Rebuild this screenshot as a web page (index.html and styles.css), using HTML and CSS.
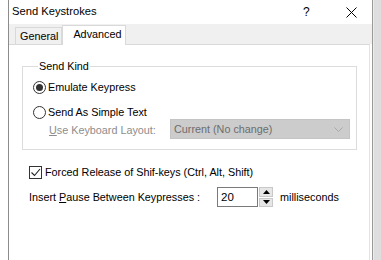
FILE: index.html
```html
<!DOCTYPE html>
<html lang="en">
<head>
	<meta charset="UTF-8">
	<title>Send Keystrokes</title>
	<link rel="stylesheet" href="styles.css">
</head>
<body>
	<div class="screen">
		<div class="window">
			<div class="titlebar">
				<span class="title">Send Keystrokes</span>
				<span class="help">?</span>
				<span class="close">
					<svg width="11" height="11" viewBox="0 0 11 11"><path d="M0.5 0.5 L10.5 10.5 M10.5 0.5 L0.5 10.5" stroke="#000" stroke-width="1" fill="none"/></svg>
				</span>
			</div>
			<div class="tabs">
				<div class="tab">General</div>
				<div class="tab active">Advanced</div>
			</div>
			<div class="page">
				<fieldset class="group">
					<legend>Send Kind</legend>
					<div class="radio"><span class="dot checked"></span>Emulate Keypress</div>
					<div class="radio second"><span class="dot"></span>Send As Simple Text</div>
					<div class="layout-row">
						<span class="muted"><u>U</u>se Keyboard Layout:</span>
						<div class="combo">
							<span>Current (No change)</span>
							<svg width="9" height="5" viewBox="0 0 9 5"><path d="M0.5 0.5 L4.5 4.5 L8.5 0.5" stroke="#a8a8a8" fill="none"/></svg>
						</div>
					</div>
				</fieldset>
				<div class="check">
					<span class="box">
						<svg width="11" height="11" viewBox="0 0 11 11"><path d="M1.5 5.5 L4.5 8.5 L10 2" stroke="#222" stroke-width="1.1" fill="none"/></svg>
					</span>Forced Release of Shif-keys (Ctrl, Alt, Shift)
				</div>
				<div class="pause-row">
					<span class="pause-label">Insert <u>P</u>ause Between Keypresses :</span>
					<div class="spin">
						<div class="num">20</div>
						<div class="arrows">
							<span class="arrow">
								<svg width="7" height="4" viewBox="0 0 7 4"><path d="M0 4 L3.5 0 L7 4 Z" fill="#000"/></svg>
							</span>
							<span class="arrow">
								<svg width="7" height="4" viewBox="0 0 7 4"><path d="M0 0 L3.5 4 L7 0 Z" fill="#000"/></svg>
							</span>
						</div>
					</div>
					<span class="unit">milliseconds</span>
				</div>
			</div>
		</div>
		<div class="desk"></div>
	</div>
</body>
</html>
```

FILE: styles.css
```css
*{
	margin: 0;
	padding: 0;
	box-sizing: border-box;
}
body{
	width: 381px;
	height: 260px;
	overflow: hidden;
	background-color: #fff;
	font-family: "Liberation Sans", Arial, sans-serif;
	font-size: 10.8px;
	color: #000;
}
.screen{
	display: flex;
	height: 260px;
	padding-left: 8px;
}
.window{
	width: 365px;
	height: 260px;
	border-left: 1px solid #8c8c8c;
	border-right: 1px solid #9a9a9a;
	display: flex;
	flex-direction: column;
	background-color: #fff;
}
.desk{
	flex: 1;
	background-color: #dedede;
	border-left: 1px solid #ececec;
}

/* title bar */
.titlebar{
	height: 24px;
	display: flex;
	align-items: center;
	padding-left: 3px;
	padding-bottom: 3px;
}
.title{
	font-size: 11.2px;
	flex: 1;
}
.help{
	font-size: 12px;
	width: 43px;
	margin-top: 2px;
}
.close{
	width: 24px;
	display: flex;
	margin-top: 3px;
	margin-right: 2px;
}

/* tabs */
.tabs{
	height: 20px;
	background-color: #f0f0f0;
	display: flex;
	align-items: flex-end;
	padding-left: 6px;
	position: relative;
	z-index: 1;
}
.tab{
	height: 17px;
	padding: 1px 3px 0 4px;
	border: 1px solid #d9d9d9;
	border-bottom: none;
	background-color: #f0f0f0;
	line-height: 15px;
}
.tab.active{
	height: 20px;
	margin-bottom: -1px;
	padding: 0 4px 0 10px;
	background-color: #fff;
	line-height: 17px;
}

/* page */
.page{
	flex: 1;
	border-top: 1px solid #d9d9d9;
	border-right: 1px solid #e3e3e3;
	margin-right: 2px;
	padding-left: 13px;
	padding-right: 12px;
}
.group{
	margin-top: 13px;
	border: 1px solid #dcdcdc;
	padding: 5px 0 10px 10px;
}
.group legend{
	margin-left: 5px;
	padding: 0 1px;
	line-height: 16px;
}
.radio{
	height: 16px;
	display: flex;
	align-items: center;
	gap: 2px;
}
.radio.second{
	margin-top: 9px;
}
.dot{
	width: 13px;
	height: 13px;
	border: 1px solid #333;
	border-radius: 50%;
	display: flex;
	align-items: center;
	justify-content: center;
}
.dot.checked::after{
	content: "";
	width: 7px;
	height: 7px;
	border-radius: 50%;
	background-color: #333;
}
.layout-row{
	display: flex;
	align-items: center;
	height: 20px;
	padding-left: 16px;
	margin-top: -1px;
}
.muted{
	color: #8d8d8d;
	width: 121px;
	padding-top: 2px;
}
.combo{
	width: 180px;
	height: 20px;
	background-color: #cccccc;
	border: 1px solid #c4c4c4;
	color: #6d6d6d;
	display: flex;
	align-items: center;
	justify-content: space-between;
	padding: 0 6px 0 3px;
}

/* checkbox + pause */
.check{
	margin-top: 14px;
	margin-left: 7px;
	height: 16px;
	display: flex;
	align-items: center;
	gap: 3px;
}
.box{
	width: 13px;
	height: 13px;
	border: 1px solid #333;
	display: flex;
	align-items: center;
	justify-content: center;
}
.pause-row{
	margin-top: 7px;
	margin-left: 7px;
	display: flex;
	align-items: center;
	height: 20px;
}
.pause-label{
	width: 188px;
}
.spin{
	display: flex;
	height: 20px;
}
.num{
	width: 41px;
	border: 1px solid #7a7a7a;
	padding: 3px 0 0 3px;
	font-size: 11.5px;
}
.arrows{
	width: 14px;
	margin-left: 1px;
	display: flex;
	flex-direction: column;
	gap: 1px;
}
.arrow{
	flex: 1;
	background-color: #e6e6e6;
	border: 1px solid #c8c8c8;
	display: flex;
	align-items: center;
	justify-content: center;
}
.unit{
	margin-left: 7px;
}
```
